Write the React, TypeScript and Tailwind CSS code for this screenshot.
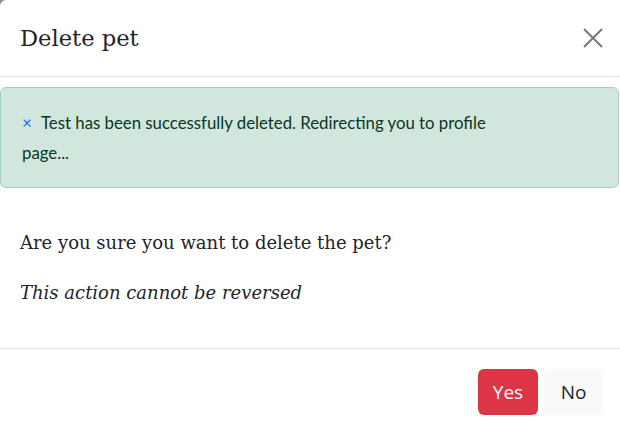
import React from "react";

const sans = { fontFamily: '"Open Sans", "Noto Sans", sans-serif' };

const App: React.FC = () => {
  return (
    <div className="w-[620px] h-[434px] overflow-hidden bg-[#8a8a8a]">
      <div className="w-full h-full bg-white rounded-tl-[6px] font-['DejaVu_Serif',serif] text-[#212529]">
        {/* header */}
        <div className="h-[77px] flex items-center justify-between pl-5 pr-[17px] border-b border-[#dee2e6]">
          <h5 className="text-[22.6px] leading-9 font-normal">Delete pet</h5>
          <button className="w-5 h-5 flex items-center justify-center text-[#777]">
            <svg width="20" height="20" viewBox="0 0 20 20" fill="none" stroke="currentColor" strokeWidth="2">
              <path d="M1 1L19 19M19 1L1 19" />
            </svg>
          </button>
        </div>

        {/* body */}
        <div className="pt-[10px] pb-10">
          <div className="w-[619px] h-[101px] pl-[21px] pr-[100px] py-5 bg-[#d1e7dd] border border-[#a3cfbb] rounded-md text-[#0a3622] text-[16.8px] leading-[30px] font-['Lato',sans-serif]">
            <span className="inline-block w-[19px] text-[#0d6efd] text-[17px] leading-[30px] align-top">×</span>
            Test has been successfully deleted. Redirecting you to profile page...
          </div>
          <div className="px-5 pt-10">
            <p className="text-[18px] leading-[30px] mb-5">Are you sure you want to delete the pet?</p>
            <p className="text-[18px] leading-[30px] italic">This action cannot be reversed</p>
          </div>
        </div>

        {/* footer */}
        <div className="border-t border-[#dee2e6] pt-5 pr-[17px] flex justify-end gap-[6px]" style={sans}>
          <button className="w-[60px] h-[46px] rounded-md bg-[#dc3545] text-white text-[19px]">Yes</button>
          <button className="w-[59px] h-[46px] rounded-md bg-[#f8f9fa] text-[#212529] text-[19px]">No</button>
        </div>
      </div>
    </div>
  );
};

export default App;
